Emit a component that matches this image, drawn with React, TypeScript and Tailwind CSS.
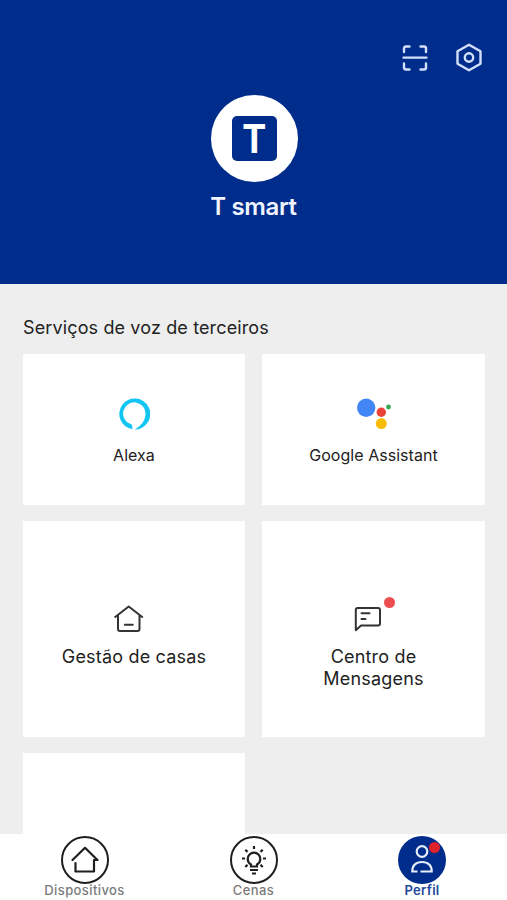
import React from 'react';

interface TabProps {
    label: string;
    active?: boolean;
    children: React.ReactNode;
}

interface ServiceCardProps {
    label: string;
    children: React.ReactNode;
}

interface MenuCardProps {
    label: string;
    unread?: boolean;
    children: React.ReactNode;
}

const ScanIcon = () => (
    <svg width="26" height="28" viewBox="0 0 26 28" fill="none" stroke="#d3e0fb" strokeWidth="2.4" strokeLinecap="round">
        <path d="M2 8V4.5Q2 2.5 4 2.5H7.5M18.5 2.5H22Q24 2.5 24 4.5V8M24 19.5V23.5Q24 25.5 22 25.5H18.5M7.5 25.5H4Q2 25.5 2 23.5V19.5M1.5 13.6H24.5" />
    </svg>
);

const SettingsIcon = () => (
    <svg width="28" height="30" viewBox="0 0 28 30" fill="none" stroke="#d3e0fb" strokeWidth="2.4" strokeLinejoin="round">
        <path d="M14 1.8L25.5 8.3V20.7L14 27.2L2.5 20.7V8.3Z" />
        <circle cx="14" cy="14.5" r="4.2" />
    </svg>
);

const AlexaIcon = () => (
    <svg width="32" height="32" viewBox="0 0 32 32">
        <path
            fill="#13c5f3"
            d="M14.3 31.3A15.5 15.5 0 1 1 16.5 31.5C22.5 28.5 27.5 23 27.5 15.5A11.2 11.2 0 1 0 12.5 26.1C14 26.7 14.3 27.5 14.3 28.5Z"
        />
    </svg>
);

const AssistantIcon = () => (
    <svg width="36" height="32" viewBox="0 0 36 32">
        <circle cx="10.2" cy="9.8" r="9.2" fill="#4285f4" />
        <circle cx="25.3" cy="14.3" r="4.7" fill="#ea4335" />
        <circle cx="32.5" cy="9" r="2.4" fill="#34a853" />
        <circle cx="25.3" cy="25.6" r="5.5" fill="#fbbc05" />
    </svg>
);

const HomeManagementIcon = () => (
    <svg width="30" height="28" viewBox="0 0 30 28" fill="none" stroke="#333" strokeWidth="2" strokeLinecap="round" strokeLinejoin="round">
        <path d="M1.2 12L14.7 1.5L28.2 12M4 10.5V24Q4 26 6 26H23.5Q25.5 26 25.5 24V10.5M10.8 19.8H18.8" />
    </svg>
);

const MessageIcon = () => (
    <svg width="30" height="28" viewBox="0 0 30 28" fill="none" stroke="#333" strokeWidth="2" strokeLinecap="round" strokeLinejoin="round">
        <path d="M2.8 25.2V5Q2.8 3 4.8 3H25Q27 3 27 5V18.5Q27 20.500 25 20.500H8ZM8.500 8.300H16.500M8.500 14H12.500" />
    </svg>
);

const DevicesIcon = () => (
    <svg width="28" height="28" viewBox="0 0 28 28" fill="none" stroke="#1f1f1f" strokeWidth="2.2" strokeLinecap="round" strokeLinejoin="round">
        <path d="M1.5 14L14 1.8L26.500 14H23V25.500H4.500V17" />
    </svg>
);

const ScenesIcon = () => (
    <svg width="26" height="30" viewBox="0 0 26 30" fill="none" stroke="#1f1f1f" strokeWidth="2.2">
        <path d="M10 21.5V19.5C7.5 18 6.7 16 6.7 13.9A6.3 6.3 0 0 1 19.3 13.9C19.3 16 18.5 18 16 19.5V21.5ZM9 25H17M11 28.5H15M13 1V4M4.3 4.7L6.5 6.9M21.7 4.7L19.5 6.9M1 13.500H4M22 13.500H25M4.300 22L6.500 19.700M21.700 22L19.500 19.700" />
    </svg>
);

const ProfileIcon = () => (
    <svg width="24" height="30" viewBox="0 0 24 30" fill="none" stroke="#e6eefc" strokeWidth="2.2">
        <circle cx="12" cy="6.5" r="5.3" />
        <path d="M7.5 26.500H2.300C2 20.500 6 17 12 17S22 20.500 21.700 26.500H10.500" />
    </svg>
);

const ServiceCard: React.FC<ServiceCardProps> = ({ label, children }) => (
    <div className="flex h-[151px] flex-col items-center bg-white pt-11">
        <div className="flex h-8 items-center">{children}</div>
        <p className="mt-[13px] text-[16px] leading-6 tracking-[0.04px]">{label}</p>
    </div>
);

const MenuCard: React.FC<MenuCardProps> = ({ label, unread, children }) => (
    <div className="flex h-[216px] flex-col items-center bg-white pt-[75px]">
        <div className="flex">
            <div className="pt-[9px]">{children}</div>
            <div className="w-[11px] pt-px pl-px">
                {unread && <div className="size-[11px] rounded-full bg-[#ee4d50]" />}
            </div>
        </div>
        <p className="mt-[13px] w-[160px] text-center text-[18px] leading-[22px] tracking-[0.18px]">{label}</p>
    </div>
);

const Tab: React.FC<TabProps> = ({ label, active, children }) => (
    <div className="flex flex-col items-center pt-[2px]">
        <div
            className={
                active
                    ? 'relative flex size-12 items-center justify-center rounded-full bg-[#002d8b]'
                    : 'relative flex size-12 items-center justify-center rounded-full border-2 border-[#1f1f1f]'
            }
        >
            {children}
            {active && <div className="absolute top-[6px] right-[6px] size-[11px] rounded-full bg-[#e0242c]" />}
        </div>
        <span
            className={
                active
                    ? '-mt-0.5 text-[13px] leading-4 font-semibold tracking-[0.3px] text-[#23489b]'
                    : '-mt-0.5 text-[13px] leading-4 font-medium tracking-[0.4px] text-[#7b7b7b]'
            }
        >
            {label}
        </span>
    </div>
);

const App: React.FC = () => {
    return (
        <div className="flex h-[900px] w-[507px] flex-col overflow-hidden bg-[#eeeeee] font-['Inter',sans-serif] text-[#222]">
            <header className="flex h-[284px] shrink-0 flex-col items-center bg-[#002d8b]">
                <div className="flex w-full items-center justify-end gap-[27px] pt-[43px] pr-6">
                    <ScanIcon />
                    <SettingsIcon />
                </div>
                <div className="mt-[22px] ml-px flex size-[87px] items-center justify-center rounded-full bg-white">
                    <div className="flex size-[45px] items-center justify-center rounded-[5px] bg-[#002d8b] text-[40px] leading-none font-bold text-white">
                        <span className="inline-block scale-x-90">T</span>
                    </div>
                </div>
                <h1 className="mt-[9px] text-[24px] leading-8 font-semibold tracking-[-0.35px] text-[#f0f4ff]">T smart</h1>
            </header>

            <main className="min-h-0 flex-1 overflow-hidden pr-[22px] pl-[23px]">
                <h2 className="pt-8 text-[18px] leading-6 tracking-[0.13px]">Serviços de voz de terceiros</h2>
                <div className="mt-[14px] grid grid-cols-[222px_223px] gap-x-[17px] gap-y-4">
                    <ServiceCard label="Alexa">
                        <AlexaIcon />
                    </ServiceCard>
                    <ServiceCard label="Google Assistant">
                        <AssistantIcon />
                    </ServiceCard>
                    <MenuCard label="Gestão de casas">
                        <HomeManagementIcon />
                    </MenuCard>
                    <MenuCard label="Centro de Mensagens" unread>
                        <MessageIcon />
                    </MenuCard>
                    <div className="h-[216px] bg-white" />
                </div>
            </main>

            <nav className="grid h-[66px] shrink-0 grid-cols-[169px_169px_168px] bg-white">
                <Tab label="Dispositivos">
                    <DevicesIcon />
                </Tab>
                <Tab label="Cenas">
                    <ScenesIcon />
                </Tab>
                <Tab label="Perfil" active>
                    <ProfileIcon />
                </Tab>
            </nav>
        </div>
    );
};

export default App;
